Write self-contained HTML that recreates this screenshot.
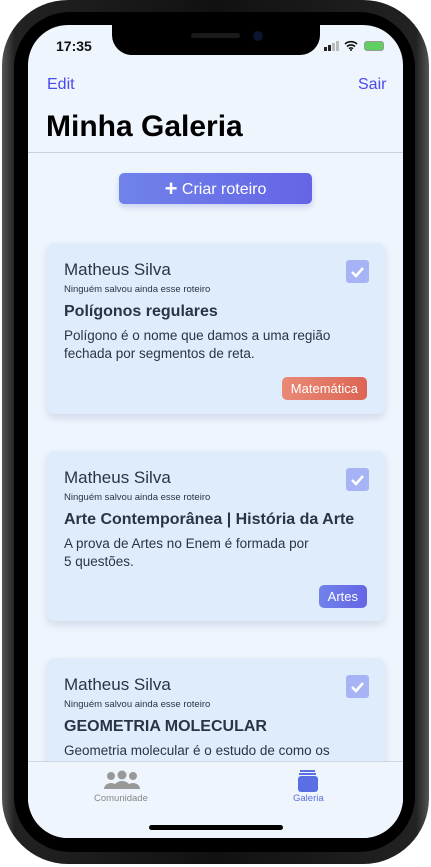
<!DOCTYPE html><html><head><style>
*{margin:0;padding:0;box-sizing:border-box}
body{width:431px;height:867px;background:#fff;position:relative;overflow:hidden;font-family:"Liberation Sans",sans-serif}
.body{position:absolute;left:2px;top:0;width:427px;height:864px;border-radius:66px;background:linear-gradient(90deg,#555,#222 3%,#111 50%,#222 97%,#555);}
.inner{position:absolute;left:14px;top:12px;width:401px;height:840px;border-radius:56px;background:#000}
.screen{position:absolute;left:28px;top:25px;width:375px;height:813px;border-radius:40px;background:#eef5fd;overflow:hidden}
.notch{position:absolute;left:84px;top:0;width:208px;height:30px;background:#000;border-radius:0 0 20px 20px}
.abs{position:absolute}
.card{position:absolute;left:19px;width:338px;background:#dfecfb;border-radius:8px;box-shadow:0 4px 8px rgba(80,100,140,.18);color:#2b3446}
.card .n{position:absolute;left:17px;top:17px;font-size:17px}
.card .s{position:absolute;left:17px;top:41px;font-size:9.5px}
.card .t{position:absolute;left:17px;top:60px;font-size:16px;font-weight:bold}
.card .d{position:absolute;left:17px;top:84px;font-size:13.5px;line-height:18px;width:310px}
.chk{position:absolute;right:16px;top:17px;width:23px;height:23px;background:#a6b4f6;border-radius:3px}
.tag{position:absolute;right:18px;top:134px;height:23px;border-radius:5px;color:#fff;font-size:13px;padding:4px 9px}
</style></head><body>
<div class="body"></div><div class="inner"></div>
<div class="screen">
<div class="notch"><div class="abs" style="left:79px;top:8px;width:49px;height:5px;border-radius:3px;background:#1a1a1a"></div><div class="abs" style="left:141px;top:6px;width:10px;height:10px;border-radius:50%;background:#0c1430"></div></div>
<div class="abs" style="left:28px;top:13px;font-size:14px;font-weight:bold;color:#111">17:35</div>
<div class="abs" style="left:296px;top:22px;width:3px;height:4px;background:#222"></div>
<div class="abs" style="left:300px;top:20px;width:3px;height:6px;background:#222"></div>
<div class="abs" style="left:304px;top:18px;width:3px;height:8px;background:#bbb"></div>
<div class="abs" style="left:308px;top:16px;width:3px;height:10px;background:#bbb"></div>
<svg class="abs" style="left:316px;top:15px" width="14" height="11" viewBox="0 0 14 11"><path d="M1 4a9 9 0 0 1 12 0M3 6.5a6 6 0 0 1 8 0M5 8.7a3 3 0 0 1 4 0" stroke="#111" stroke-width="1.6" fill="none"/><circle cx="7" cy="10" r="1" fill="#111"/></svg>
<div class="abs" style="left:336px;top:16px;width:20px;height:10px;border:1px solid #999;border-radius:3px;background:#5fcf5f"></div>
<div class="abs" style="left:19px;top:51px;font-size:16px;color:#4a4af0">Edit</div>
<div class="abs" style="left:330px;top:51px;font-size:16px;color:#4a4af0">Sair</div>
<div class="abs" style="left:18px;top:85px;font-size:30px;font-weight:bold;color:#000">Minha Galeria</div>
<div class="abs" style="left:0;top:127px;width:375px;height:1px;background:#c9d2dc"></div>
<div class="abs" style="left:91px;top:148px;width:193px;height:31px;border-radius:5px;background:linear-gradient(90deg,#7083ea,#6564e6);box-shadow:0 3px 6px rgba(90,100,200,.25);color:#fff;font-size:16px;text-align:center;line-height:31px"><b style="font-size:22px;vertical-align:-2px">+</b> Criar roteiro</div>
<div class="card" style="top:218px;height:171px"><div class="n">Matheus Silva</div><div class="s">Ninguém salvou ainda esse roteiro</div><div class="t">Polígonos regulares</div><div class="d">Polígono é o nome que damos a uma região fechada por segmentos de reta.</div><div class="chk"><svg width="23" height="23"><path d="M6 12l4 4 7-8" stroke="#fff" stroke-width="2.5" fill="none"/></svg></div><div class="tag" style="background:linear-gradient(90deg,#e98a76,#dd6454)">Matemática</div></div>
<div class="card" style="top:426px;height:170px"><div class="n">Matheus Silva</div><div class="s">Ninguém salvou ainda esse roteiro</div><div class="t">Arte Contemporânea | História da Arte</div><div class="d">A prova de Artes no Enem é formada por<br>5 questões.</div><div class="chk"><svg width="23" height="23"><path d="M6 12l4 4 7-8" stroke="#fff" stroke-width="2.5" fill="none"/></svg></div><div class="tag" style="background:linear-gradient(90deg,#7083ea,#6564e6)">Artes</div></div>
<div class="card" style="top:633px;height:170px"><div class="n">Matheus Silva</div><div class="s">Ninguém salvou ainda esse roteiro</div><div class="t">GEOMETRIA MOLECULAR</div><div class="d">Geometria molecular é o estudo de como os</div><div class="chk"><svg width="23" height="23"><path d="M6 12l4 4 7-8" stroke="#fff" stroke-width="2.5" fill="none"/></svg></div></div>
<div class="abs" style="left:0;top:736px;width:375px;height:77px;background:#eef5fd;border-top:1px solid #cdd6e0"></div>
<svg class="abs" style="left:75px;top:745px" width="38" height="20"><circle cx="8" cy="6" r="4" fill="#999"/><circle cx="19" cy="5" r="4.5" fill="#999"/><circle cx="30" cy="6" r="4" fill="#999"/><path d="M1 19a7 6 0 0 1 14 0zM10 19a9 8 0 0 1 18 0zM23 19a7 6 0 0 1 14 0z" fill="#999"/></svg>
<div class="abs" style="left:66px;top:768px;font-size:9.5px;color:#888">Comunidade</div>
<div class="abs" style="left:272px;top:745px;width:15px;height:1.5px;background:#5a6fe3"></div>
<div class="abs" style="left:271px;top:748px;width:17px;height:1.5px;background:#5a6fe3"></div>
<div class="abs" style="left:270px;top:751px;width:20px;height:16px;border-radius:3px;background:#5a6fe3"></div>
<div class="abs" style="left:265px;top:768px;font-size:9.5px;color:#5a6fe3">Galeria</div>
<div class="abs" style="left:121px;top:800px;width:134px;height:5px;border-radius:3px;background:#000"></div>
</div>
</body></html>
